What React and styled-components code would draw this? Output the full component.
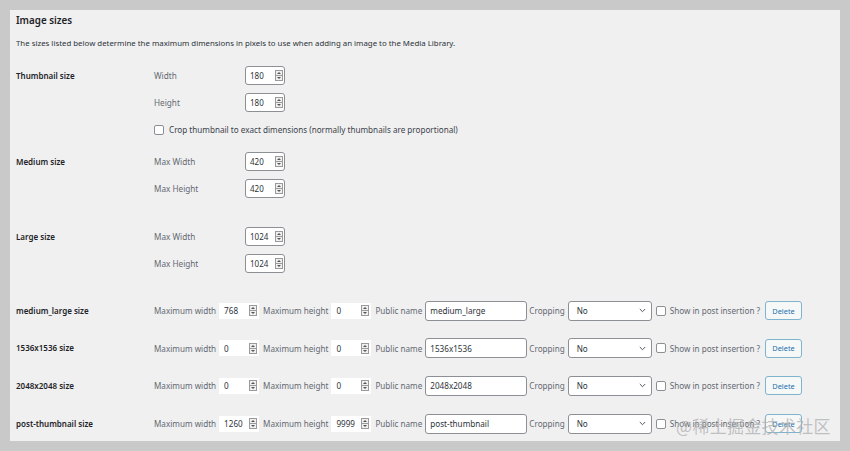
import React from 'react';
import styled, { createGlobalStyle } from 'styled-components';

const Global = createGlobalStyle`
  html, body {
    margin: 0;
    padding: 0;
    background: #c9c9c9;
    font-family: "Noto Sans", "Open Sans", sans-serif;
    color: #1d2327;
  }
`;

const Page = styled.div`
  width: 850px;
  height: 451px;
  padding: 10px;
  box-sizing: border-box;
  position: relative;
`;

const Panel = styled.div`
  height: 431px;
  background: #f0f0f1;
  padding: 4px 6px 0 6px;
  box-sizing: border-box;
`;

const Title = styled.h2`
  margin: 0;
  font-size: 9.8px;
  line-height: 13px;
  font-weight: 600;
`;

const Desc = styled.p`
  margin: 10px 0 0 0;
  font-size: 7.85px;
  line-height: 12px;
  color: #2c3338;
`;

const Section = styled.div`
  display: grid;
  grid-template-columns: 138px 1fr;
  margin-top: ${({ gap }) => gap}px;
`;

const Head = styled.div`
  font-size: 8px;
  font-weight: 600;
  line-height: ${({ rowH }) => rowH || 27}px;
  white-space: nowrap;
`;

const Fields = styled.div`
  display: flex;
  flex-direction: column;
`;

const FieldRow = styled.div`
  display: flex;
  align-items: center;
  height: 27px;
`;

const SubLabel = styled.span`
  width: 91px;
  font-size: 8.2px;
  color: #646970;
`;

const NumBox = styled.div`
  width: 40px;
  height: 19px;
  box-sizing: border-box;
  background: #fff;
  border: 1px solid #8c8f94;
  border-radius: 3px;
  display: flex;
  align-items: center;
  justify-content: space-between;
  padding: 0 1px 0 4px;
  font-size: 8px;
  color: #2c3338;
`;

const CheckLine = styled.label`
  display: flex;
  align-items: center;
  gap: 5px;
  font-size: 8.15px;
  color: #3c434a;
  white-space: nowrap;
`;

const Check = styled.span`
  width: 8px;
  height: 8px;
  border: 1px solid #8c8f94;
  border-radius: 2px;
  background: #fff;
  flex: none;
`;

const CustomRow = styled.div`
  display: grid;
  grid-template-columns: 138px 1fr;
  align-items: center;
  height: 37.6px;
`;

const Inline = styled.div`
  display: flex;
  align-items: center;
  font-size: 8.15px;
  color: #646970;
  white-space: nowrap;
`;

const InLabel = styled.span`
  margin-right: ${({ mr }) => mr ?? 3}px;
`;

const FlatNum = styled.div`
  width: 40px;
  height: 16px;
  box-sizing: border-box;
  background: #fff;
  display: flex;
  align-items: center;
  justify-content: space-between;
  padding: 0 2px 0 5px;
  margin-right: 4px;
  color: #2c3338;
`;

const TextBox = styled.div`
  width: 102px;
  height: 20px;
  box-sizing: border-box;
  border: 1px solid #8c8f94;
  border-radius: 3px;
  background: #fff;
  display: flex;
  align-items: center;
  padding-left: 4px;
  margin-right: 2px;
  color: #2c3338;
`;

const Select = styled.div`
  width: 84px;
  height: 20px;
  box-sizing: border-box;
  border: 1px solid #8c8f94;
  border-radius: 3px;
  background: #fff;
  display: flex;
  align-items: center;
  justify-content: space-between;
  padding: 0 5px 0 8px;
  margin: 0 4px 0 3px;
  color: #2c3338;
`;

const Button = styled.button`
  height: 19px;
  width: 37px;
  padding: 0;
  margin-left: 2px;
  font-family: inherit;
  font-size: 7.4px;
  color: #2271b1;
  background: #f6f7f7;
  border: 1px solid #7fb4cf;
  border-radius: 3px;
`;

const Watermark = styled.div`
  position: absolute;
  left: 676px;
  top: 413px;
  font-size: 17px;
  letter-spacing: 0.3px;
  color: rgba(175, 175, 175, 0.75);
  font-family: "Noto Sans CJK SC", sans-serif;
  white-space: nowrap;
`;

const Spinner = () => (
  <svg width="8" height="11" viewBox="0 0 8 11">
    <rect x="0.5" y="0.5" width="7" height="10" fill="#f0f0f0" stroke="#9a9a9a" />
    <line x1="1" y1="5.5" x2="7" y2="5.5" stroke="#9a9a9a" />
    <path d="M2 4 L4 2 L6 4 Z" fill="#555" />
    <path d="M2 7 L4 9 L6 7 Z" fill="#555" />
  </svg>
);

const Chevron = () => (
  <svg width="7" height="5" viewBox="0 0 7 5">
    <path d="M0.8 1 L3.5 3.7 L6.2 1" fill="none" stroke="#50575e" strokeWidth="1" />
  </svg>
);

const NumberField = ({ value }) => (
  <NumBox>
    <span>{value}</span>
    <Spinner />
  </NumBox>
);

const FlatNumber = ({ value }) => (
  <FlatNum>
    <span>{value}</span>
    <Spinner />
  </FlatNum>
);

const builtIn = [
  { name: 'Medium size', w: 420, h: 420, gap: 5 },
  { name: 'Large size', w: 1024, h: 1024, gap: 21 },
];

const custom = [
  { name: 'medium_large size', w: 768, h: 0, pub: 'medium_large' },
  { name: '1536x1536 size', w: 0, h: 0, pub: '1536x1536' },
  { name: '2048x2048 size', w: 0, h: 0, pub: '2048x2048' },
  { name: 'post-thumbnail size', w: 1260, h: 9999, pub: 'post-thumbnail' },
];

export default function App() {
  return (
    <Page>
      <Global />
      <Panel>
        <Title>Image sizes</Title>
        <Desc>
          The sizes listed below determine the maximum dimensions in pixels to use when adding an image to the Media Library.
        </Desc>

        <Section gap={13}>
          <Head>Thumbnail size</Head>
          <Fields>
            <FieldRow>
              <SubLabel>Width</SubLabel>
              <NumberField value={180} />
            </FieldRow>
            <FieldRow>
              <SubLabel>Height</SubLabel>
              <NumberField value={180} />
            </FieldRow>
            <FieldRow>
              <CheckLine>
                <Check />
                Crop thumbnail to exact dimensions (normally thumbnails are proportional)
              </CheckLine>
            </FieldRow>
          </Fields>
        </Section>

        {builtIn.map((s) => (
          <Section key={s.name} gap={s.gap}>
            <Head>{s.name}</Head>
            <Fields>
              <FieldRow>
                <SubLabel>Max Width</SubLabel>
                <NumberField value={s.w} />
              </FieldRow>
              <FieldRow>
                <SubLabel>Max Height</SubLabel>
                <NumberField value={s.h} />
              </FieldRow>
            </Fields>
          </Section>
        ))}

        <div style={{ height: 15 }} />

        {custom.map((c) => (
          <CustomRow key={c.name}>
            <Head rowH={16}>{c.name}</Head>
            <Inline>
              <InLabel>Maximum width</InLabel>
              <FlatNumber value={c.w} />
              <InLabel>Maximum height</InLabel>
              <FlatNumber value={c.h} />
              <InLabel mr={3}>Public name</InLabel>
              <TextBox>{c.pub}</TextBox>
              <InLabel mr={0}>Cropping</InLabel>
              <Select>
                <span>No</span>
                <Chevron />
              </Select>
              <Check />
              <InLabel style={{ marginLeft: 4 }}>Show in post insertion ?</InLabel>
              <Button>Delete</Button>
            </Inline>
          </CustomRow>
        ))}
      </Panel>
      <Watermark>@稀土掘金技术社区</Watermark>
    </Page>
  );
}
